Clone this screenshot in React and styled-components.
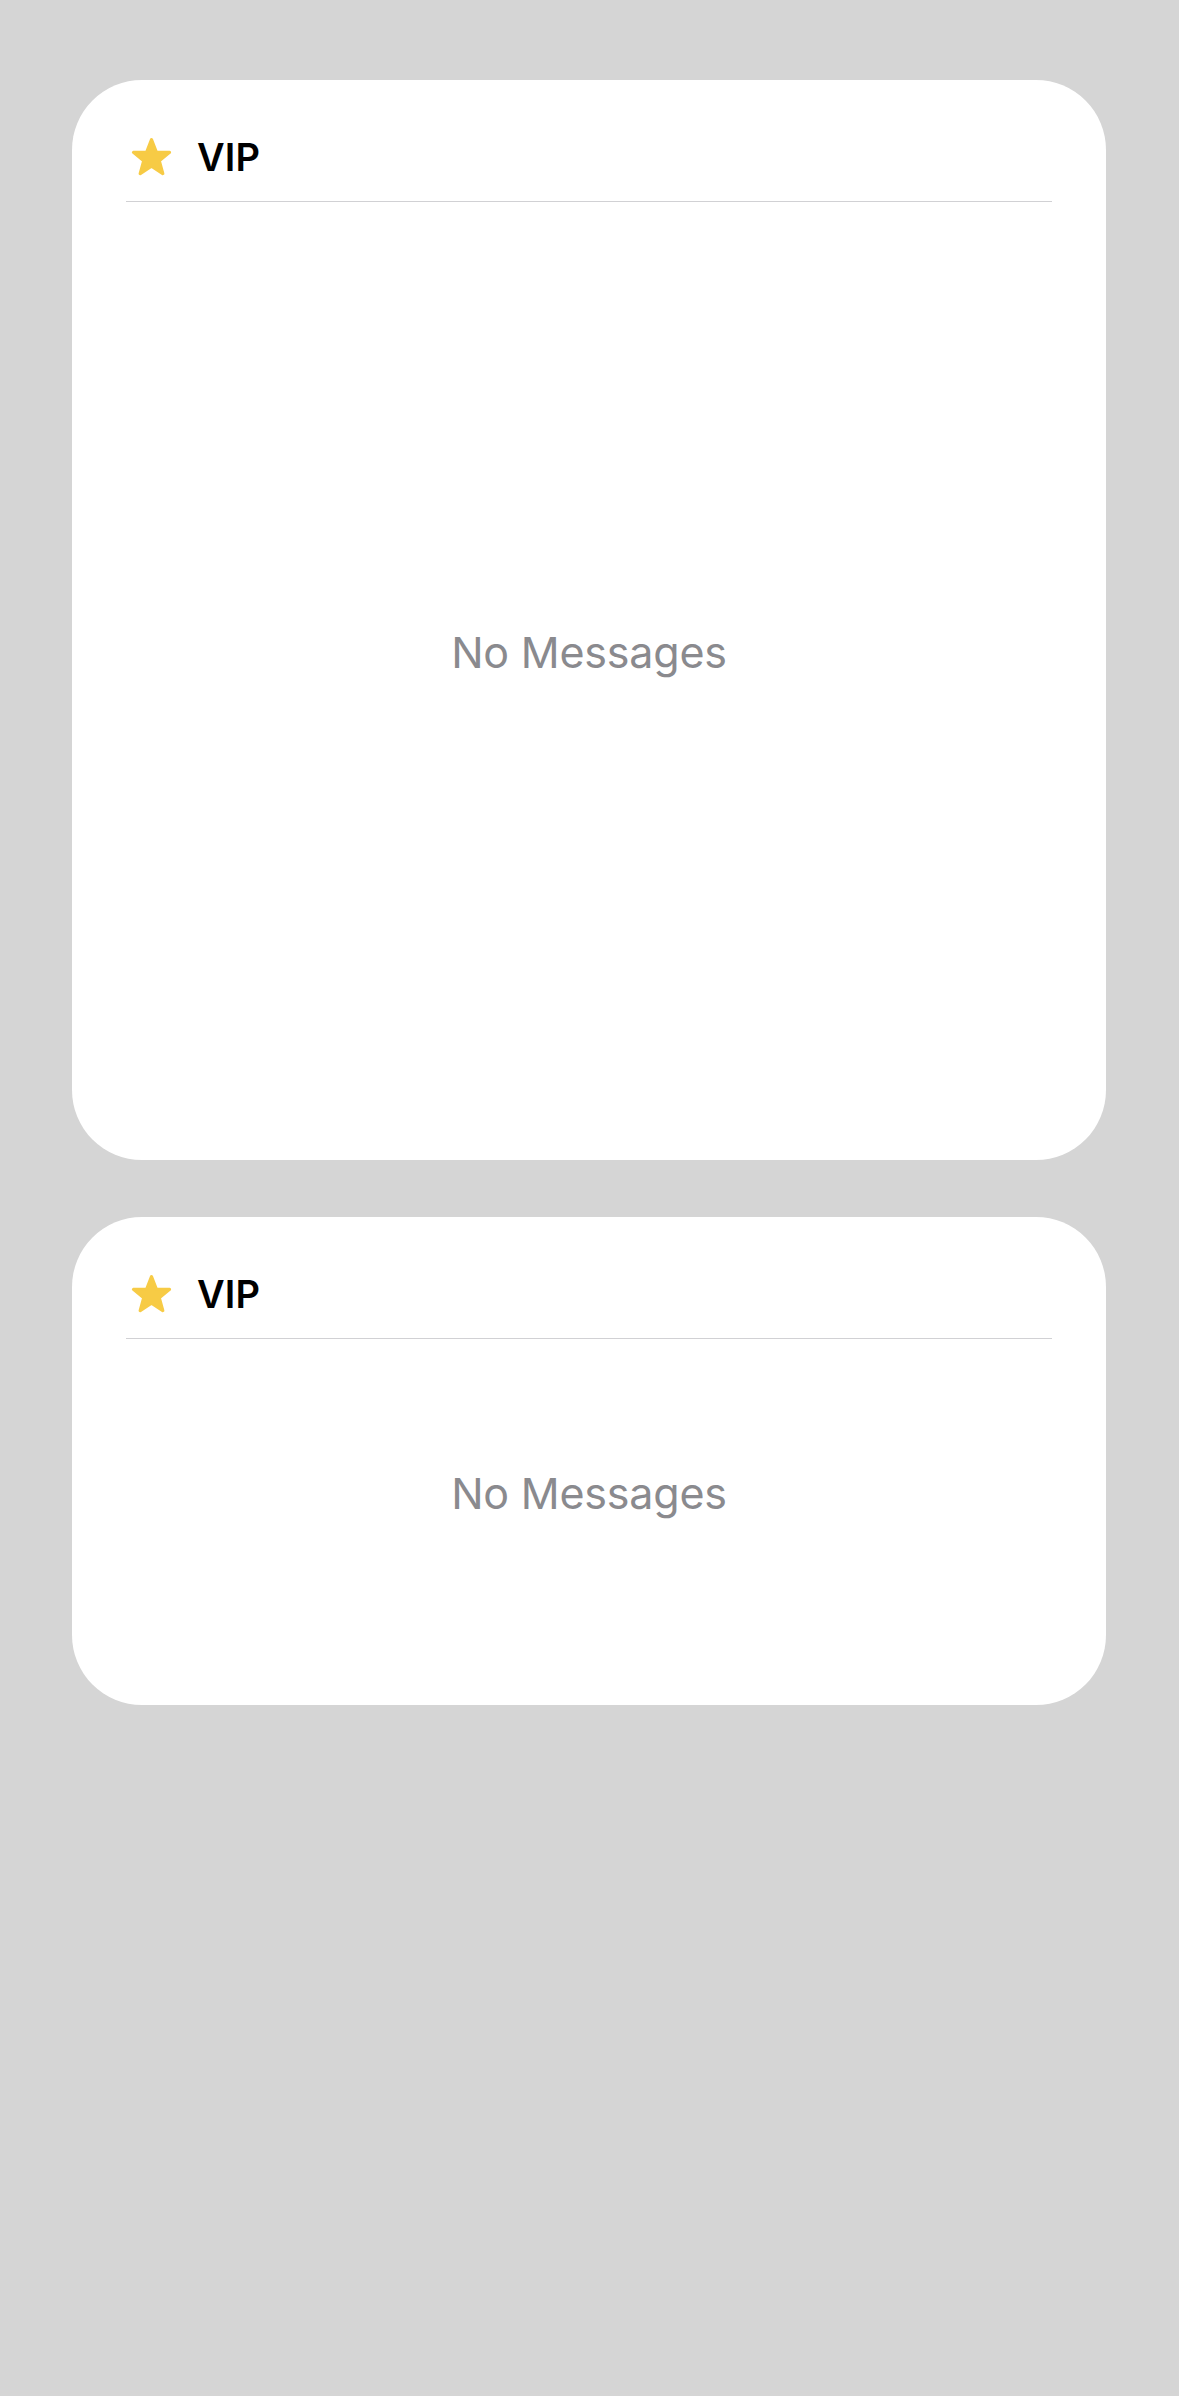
import React from 'react'
import styled, { createGlobalStyle } from 'styled-components'

const Global = createGlobalStyle`
  html, body {
    margin: 0;
    padding: 0;
    background: #d5d5d5;
  }
  body {
    font-family: Inter, "Noto Sans", "Liberation Sans", sans-serif;
    -webkit-font-smoothing: antialiased;
  }
`

const Page = styled.div`
  min-height: 2396px;
  box-sizing: border-box;
  padding: 80px 73px 0 72px;
  display: flex;
  flex-direction: column;
  gap: 57px;
`

const Card = styled.section`
  height: ${p => p.h}px;
  background: #ffffff;
  border-radius: 70px;
  padding: 0 54px;
  box-sizing: border-box;
  display: flex;
  flex-direction: column;
`

const Header = styled.div`
  display: flex;
  align-items: center;
  gap: 23px;
  height: 42px;
  margin-top: 56px;
  padding-left: 3px;
  padding-bottom: 23px;
  border-bottom: 1.5px solid #d1d1d4;
`

const Title = styled.h2`
  margin: 0;
  font-size: 38px;
  font-weight: 600;
  color: #000;
  letter-spacing: 0.2px;
`

const Body = styled.div`
  flex: 1;
  display: flex;
  align-items: center;
  justify-content: center;
  padding-bottom: 58px;
`

const Empty = styled.div`
  font-size: 43px;
  font-weight: 400;
  color: #8a8a8e;
  letter-spacing: -0.2px;
`

function Star() {
  return (
    <svg width="45" height="42" viewBox="0 0 42 40">
      <path
        d="M21 3.5 L25.6 15.2 L38.2 15.6 L28.4 23.5 L31.8 35.8 L21 28.8 L10.2 35.8 L13.6 23.5 L3.8 15.6 L16.4 15.2 Z"
        fill="#f7cb45"
        stroke="#f7cb45"
        strokeWidth="3"
        strokeLinejoin="round"
      />
    </svg>
  )
}

function VipWidget({ h }) {
  return (
    <Card h={h}>
      <Header>
        <Star />
        <Title>VIP</Title>
      </Header>
      <Body>
        <Empty>No Messages</Empty>
      </Body>
    </Card>
  )
}

export default function App() {
  return (
    <>
      <Global />
      <Page>
        <VipWidget h={1080} />
        <VipWidget h={488} />
      </Page>
    </>
  )
}
